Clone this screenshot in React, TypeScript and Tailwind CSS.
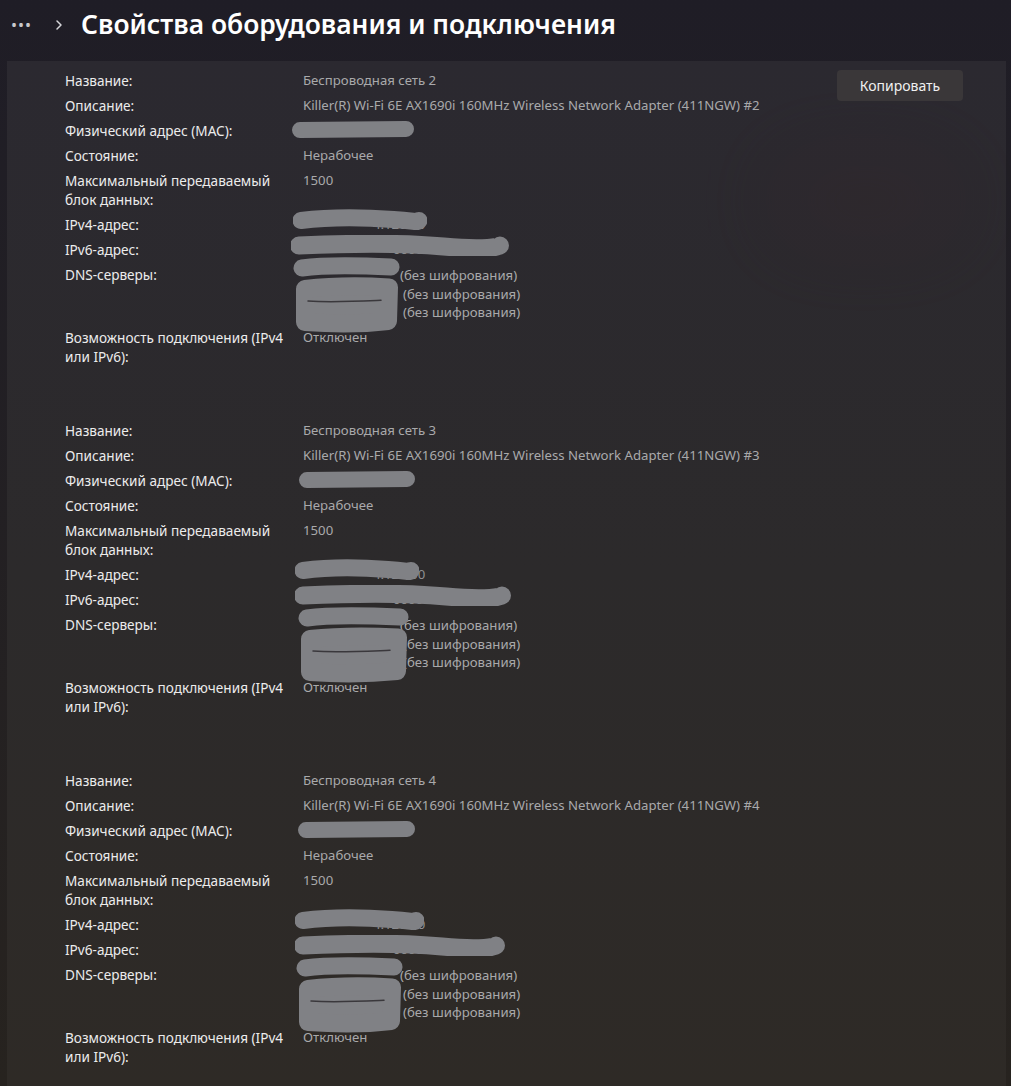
import React from 'react';

type Scrib = 'pill' | 'wave' | 'long' | 'dns';

// grey "redaction" marker strokes drawn over values
function Scribble({ kind, w, h, dx = 0, dy = 0 }: { kind: Scrib; w: number; h: number; dx?: number; dy?: number }) {
  const stroke = '#808185';
  let body: React.ReactNode = null;
  if (kind === 'pill') {
    body = <path d={`M9 ${h / 2} L${w - 9} ${h / 2 - 1}`} stroke={stroke} strokeWidth={h - 2} strokeLinecap="round" fill="none" />;
  } else if (kind === 'wave') {
    body = (
      <path
        d={`M8 ${h / 2 + 1} C ${w * 0.3} ${h / 2 - 3}, ${w * 0.55} ${h / 2 - 2}, ${w * 0.75} ${h / 2} S ${w - 10} ${h / 2 + 3}, ${w - 8} ${h / 2 + 1}`}
        stroke={stroke}
        strokeWidth={h - 4}
        strokeLinecap="round"
        fill="none"
      />
    );
  } else if (kind === 'long') {
    body = (
      <path
        d={`M8 ${h / 2} C ${w * 0.25} ${h / 2 - 2}, ${w * 0.5} ${h / 2 - 3}, ${w * 0.7} ${h / 2 + 1} S ${w - 10} ${h / 2 + 1}, ${w - 9} ${h / 2}`}
        stroke={stroke}
        strokeWidth={h - 3}
        strokeLinecap="round"
        fill="none"
      />
    );
  } else {
    body = (
      <g stroke={stroke} fill="none" strokeLinecap="round" strokeLinejoin="round">
        <path d={`M9 11 C 30 8, 60 8, ${w - 10} 10`} strokeWidth={17} />
        <path d={`M12 ${h * 0.42} C 40 ${h * 0.38}, 70 ${h * 0.38}, ${w - 12} ${h * 0.4} L ${w - 13} ${h - 12} C 70 ${h - 9}, 40 ${h - 9}, 12 ${h - 11} Z`} strokeWidth={18} fill={stroke} />
        <path d={`M15 ${h * 0.58} C 40 ${h * 0.6}, 70 ${h * 0.58}, ${w - 20} ${h * 0.57}`} stroke="#3a383c" strokeWidth={1.5} />
      </g>
    );
  }
  return (
    <svg
      className="absolute pointer-events-none"
      style={{ left: dx, top: dy }}
      width={w}
      height={h}
      viewBox={`0 0 ${w} ${h}`}
    >
      {body}
    </svg>
  );
}

function Row({ label, children }: { label: React.ReactNode; children?: React.ReactNode }) {
  return (
    <div className="flex">
      <div className="w-[238px] shrink-0 pr-[6px] text-[13.6px] leading-[19px] text-[#ececec]">{label}</div>
      <div className="relative flex-1 text-[13.2px] leading-[19px] text-[#a9a9ab]">{children}</div>
    </div>
  );
}

interface Adapter {
  n: number;
  mac: [number, number];
  ipv4: [number, number];
  ipv6: [number, number];
  dns: [number, number];
}

const adapters: Adapter[] = [
  { n: 2, mac: [-12, 124], ipv4: [-10, 134], ipv6: [-12, 218], dns: [-10, 108] },
  { n: 3, mac: [-5, 118], ipv4: [-8, 124], ipv6: [-8, 216], dns: [-5, 112] },
  { n: 4, mac: [-6, 119], ipv4: [-8, 129], ipv6: [-8, 210], dns: [-7, 108] },
];

function Section({ a, button }: { a: Adapter; button?: boolean }) {
  return (
    <div className="flex items-start">
      <div className="flex flex-1 flex-col gap-[6px]">
        <Row label="Название:">Беспроводная сеть {a.n}</Row>
        <Row label="Описание:">Killer(R) Wi-Fi 6E AX1690i 160MHz Wireless Network Adapter (411NGW) #{a.n}</Row>
        <Row label="Физический адрес (MAC):">
          <span className="invisible">00-00-00-00-00-00</span>
          <Scribble kind="pill" w={a.mac[1]} h={18} dx={a.mac[0]} dy={0} />
        </Row>
        <Row label="Состояние:">Нерабочее</Row>
        <Row label="Максимальный передаваемый блок данных:">1500</Row>
        <Row label="IPv4-адрес:">
          <span className="pl-[70px] text-[#8f8f92]">4.120.00</span>
          <Scribble kind="wave" w={a.ipv4[1]} h={21} dx={a.ipv4[0]} dy={-6} />
        </Row>
        <Row label="IPv6-адрес:">
          <span className="pl-[90px] text-[#8f8f92]">00000:0000:0000</span>
          <Scribble kind="long" w={a.ipv6[1]} h={21} dx={a.ipv6[0]} dy={-5} />
        </Row>
        <Row label="DNS-серверы:">
          <div className="flex flex-col">
            <span className="pl-[97px] leading-[20px]">(без шифрования)</span>
            <span className="pl-[100px] leading-[18px]">(без шифрования)</span>
            <span className="pl-[100px] leading-[19px]">(без шифрования)</span>
          </div>
          <Scribble kind="dns" w={a.dns[1]} h={76} dx={a.dns[0]} dy={-8} />
        </Row>
        <Row label="Возможность подключения (IPv4 или IPv6):">Отключен</Row>
      </div>
      {button && (
        <button className="mr-[43px] -mt-[1px] h-[31px] w-[126px] rounded-[4px] bg-[#3a3739] text-[14px] text-[#f0f0f0]">
          Копировать
        </button>
      )}
    </div>
  );
}

export default function App() {
  return (
    <div
      className="min-h-screen overflow-hidden bg-gradient-to-b from-[#1f1d26] to-[#27231f]"
      style={{ fontFamily: '"Segoe UI", "Noto Sans", "Open Sans", sans-serif' }}
    >
      {/* Breadcrumb header */}
      <div className="flex h-[61px] items-center pb-[12px]">
        <span className="ml-[11px] text-[16px] tracking-[1px] text-[#c8c8cc]">•••</span>
        <svg className="ml-[22px]" width="10" height="12" viewBox="0 0 10 12" fill="none">
          <path d="M3 2 L7 6 L3 10" stroke="#d6d6da" strokeWidth="1.5" strokeLinecap="round" strokeLinejoin="round" />
        </svg>
        <h1 className="ml-[17px] text-[26.4px] font-semibold leading-none text-white">Свойства оборудования и подключения</h1>
      </div>

      {/* Properties panel */}
      <div className="relative ml-[7px] mr-[5px] min-h-[1025px] bg-gradient-to-b from-[#2b2930] via-[#2c2a2b] to-[#2e2a26] pl-[58px] pt-[10px]">
        <div className="pointer-events-none absolute right-[50px] top-[100px] h-[80px] w-[180px] rounded-full bg-[#3a2428] opacity-25 blur-2xl" />
        <div className="relative flex flex-col gap-[55px]">
          {adapters.map((a, i) => (
            <Section key={a.n} a={a} button={i === 0} />
          ))}
        </div>
      </div>
    </div>
  );
}
